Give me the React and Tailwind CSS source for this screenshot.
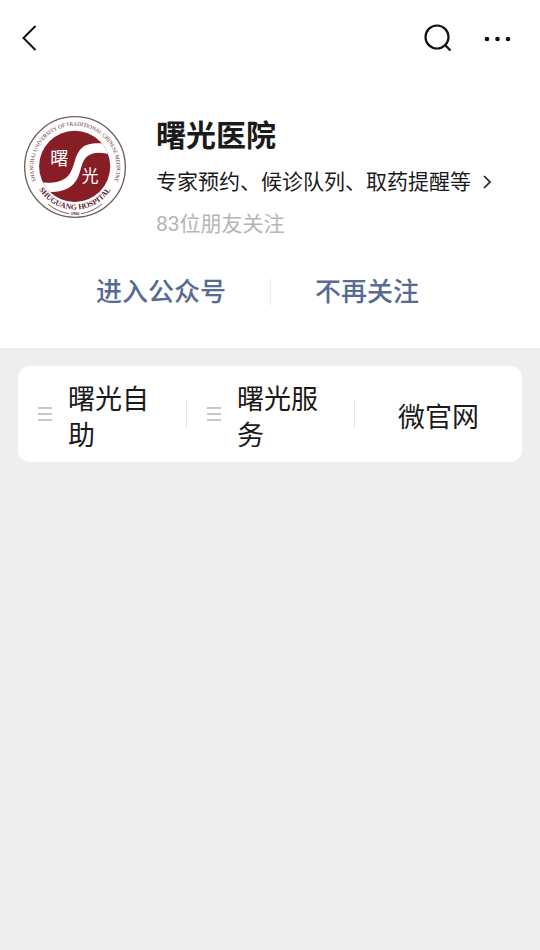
const menuItems = [
  { label: "曙光自助", hasSubmenu: true },
  { label: "曙光服务", hasSubmenu: true },
  { label: "微官网", hasSubmenu: false },
];

function HospitalLogo() {
  return (
    <svg
      viewBox="28 28 304 304"
      className="size-[102px] shrink-0"
      role="img"
      aria-label="曙光医院"
    >
      <defs>
        <path id="ring-top" d="M88 264 A124 124 0 1 1 272 264" />
        <path id="ring-bottom" d="M60 217 A125 125 0 0 0 300 217" />
        <clipPath id="disc">
          <circle cx="179" cy="178" r="106" />
        </clipPath>
      </defs>
      <circle cx="180" cy="180" r="150" fill="#fff" stroke="#6f6264" strokeWidth="4" />
      <circle cx="179" cy="178" r="106" fill="#871e25" />
      <path
        clipPath="url(#disc)"
        fill="#fff"
        d="M60 222 C92 231 138 230 160 206 C182 180 176 142 204 120 C224 106 256 106 300 118 L300 150 C264 132 232 134 214 150 C194 170 200 204 176 230 C156 252 120 258 88 252 Z"
      />
      <g fill="#fff" fontFamily="'Noto Sans CJK SC', sans-serif">
        <text x="106" y="174" fontSize="54">曙</text>
        <text x="200" y="225" fontSize="50">光</text>
      </g>
      <g fill="#5c2228" fontFamily="'Liberation Serif', serif" textAnchor="middle">
        <text fontSize="16">
          <textPath href="#ring-top" startOffset="50%">
            SHANGHAI UNIVERSITY OF TRADITIONAL CHINESE MEDICINE
          </textPath>
        </text>
        <text fontSize="23" fontWeight="700">
          <textPath href="#ring-bottom" startOffset="50%">
            SHUGUANG HOSPITAL
          </textPath>
        </text>
        <text x="180" y="323" fontSize="13" fontWeight="700">1906</text>
      </g>
      <path
        d="M100 291 Q128 314 162 319 M198 319 Q232 314 260 291"
        fill="none"
        stroke="#6b3a40"
        strokeWidth="2.500"
      />
    </svg>
  );
}

function TopBar() {
  return (
    <header className="flex h-[76px] items-center justify-between pr-[28px] pl-[21px]">
      <button type="button" aria-label="返回">
        <svg viewBox="0 0 16 26" className="h-[26px] w-4" fill="none" stroke="#111" strokeWidth="2">
          <path d="M14.500 1 L2.500 13 L14.500 25" />
        </svg>
      </button>
      <div className="flex items-center gap-8">
        <button type="button" aria-label="搜索">
          <svg viewBox="0 0 28 28" className="size-7" fill="none" stroke="#111" strokeWidth="2.200">
            <circle cx="13" cy="13" r="11.500" />
            <path d="M21 21 L26.500 26.500" />
          </svg>
        </button>
        <button type="button" aria-label="更多">
          <svg viewBox="0 0 28 8" className="h-2 w-7" fill="#111">
            <circle cx="3" cy="5" r="2.300" />
            <circle cx="13.500" cy="5" r="2.300" />
            <circle cx="24" cy="5" r="2.300" />
          </svg>
        </button>
      </div>
    </header>
  );
}

function Profile() {
  return (
    <section className="flex items-start gap-[30px] pt-10 pl-6">
      <HospitalLogo />
      <div className="min-w-0">
        <h1 className="text-[30px] leading-[40px] font-bold">曙光医院</h1>
        <a href="#intro" className="mt-[6px] flex items-center gap-3 text-[21px] leading-[40px]">
          专家预约、候诊队列、取药提醒等
          <svg viewBox="0 0 8 14" className="h-[14px] w-2" fill="none" stroke="#222" strokeWidth="1.700">
            <path d="M1 1 L7 7 L1 13" />
          </svg>
        </a>
        <p className="mt-[2px] text-[21px] leading-[40px] text-[#b5b5b5]">83位朋友关注</p>
      </div>
    </section>
  );
}

export default function App() {
  return (
    <div className="min-h-screen bg-[#eeeeee] font-[Roboto,'Noto_Sans_CJK_SC',sans-serif] text-[#1a1a1a]">
      <div className="bg-white pb-9">
        <TopBar />
        <Profile />
        <div className="mt-7 flex items-center gap-11 pl-24 text-[26px] leading-[40px] font-medium text-[#576b95]">
          <button type="button">进入公众号</button>
          <span className="h-7 w-px bg-[#eeeeee]" />
          <button type="button">不再关注</button>
        </div>
      </div>

      <nav className="mx-[18px] mt-[18px] flex items-center rounded-xl bg-white py-2">
        {menuItems.map(({ label, hasSubmenu }, i) => (
          <div key={label} className="flex flex-1 items-center">
            {i > 0 && <span className="h-7 w-px shrink-0 bg-[#e5e5e5]" />}
            <button
              type="button"
              className={`flex flex-1 items-center gap-4 px-5 text-[27px] leading-[36px] ${
                hasSubmenu ? "text-left" : "justify-center"
              }`}
            >
              {hasSubmenu && (
                <svg viewBox="0 0 14 14" className="size-[14px] shrink-0" stroke="#b8b8b8" strokeWidth="1.600">
                  <path d="M0 1 H14 M0 7 H14 M0 13 H14" />
                </svg>
              )}
              <span className="pt-2">{label}</span>
            </button>
          </div>
        ))}
      </nav>
    </div>
  );
}
